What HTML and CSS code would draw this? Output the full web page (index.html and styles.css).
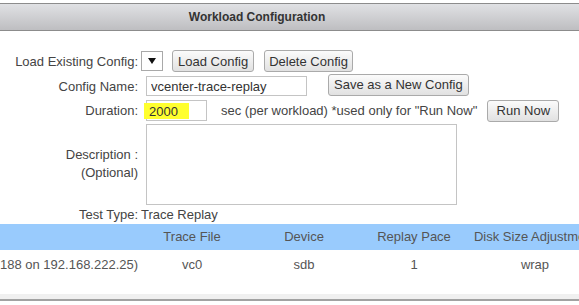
FILE: index.html
```html
<!DOCTYPE html>
<html lang="en">
<head>
    <meta charset="UTF-8">
    <meta name="viewport" content="width=device-width, initial-scale=1.0">
    <title>Workload Configuration</title>
    <link rel="stylesheet" href="styles.css">
</head>
<body>
    <div class="panel">
        <div class="panel_title">Workload Configuration</div>

        <div class="config_form">
            <label class="lbl">Load Existing Config:</label>
            <div class="field">
                <span class="select"><span class="arrow"></span></span>
                <button class="btn btn_load">Load Config</button>
                <button class="btn btn_delete">Delete Config</button>
            </div>

            <label class="lbl" for="config_name">Config Name:</label>
            <div class="field">
                <input type="text" id="config_name" class="txt txt_name" value="vcenter-trace-replay">
                <button class="btn btn_save">Save as a New Config</button>
            </div>

            <label class="lbl">Duration:</label>
            <div class="field">
                <span class="txt txt_duration"><span class="hl">2000</span></span>
                <span class="hint">sec (per workload) *used only for "Run Now"</span>
                <button class="btn btn_run">Run Now</button>
            </div>

            <label class="lbl lbl_desc">Description :<br>(Optional)</label>
            <div class="field">
                <textarea class="desc"></textarea>
            </div>

            <label class="lbl">Test Type:</label>
            <div class="field test_type">Trace Replay</div>
        </div>

        <div class="trace_table">
            <div class="row head">
                <div class="cell first"></div>
                <div class="cell">Trace File</div>
                <div class="cell">Device</div>
                <div class="cell">Replay Pace</div>
                <div class="cell">Disk Size Adjustment</div>
            </div>
            <div class="row">
                <div class="cell first">188 on 192.168.222.25)</div>
                <div class="cell">vc0</div>
                <div class="cell">sdb</div>
                <div class="cell">1</div>
                <div class="cell">wrap</div>
            </div>
        </div>
        <div class="panel_foot"></div>
    </div>
</body>
</html>
```

FILE: styles.css
```css
body { margin: 3px 0 0 0; background: #fff; font-family: "Liberation Sans", Arial, sans-serif; font-size: 13px; color: #3a3a3a; overflow: hidden; }

.panel_title { height: 26px; line-height: 26px; border-top: 1px solid #8c8c8c; border-bottom: 1px solid #8c8c8c; background: linear-gradient(#e0e1e4, #bebec1); text-align: center; padding-right: 65px; font-weight: bold; font-size: 12px; color: #333; }

.config_form { display: grid; grid-template-columns: 138px 1fr; grid-template-rows: 24px 26px 23px 84px 16px; column-gap: 3px; padding-top: 18px; }
.lbl { text-align: right; align-self: center; color: #444; }
.lbl_desc { line-height: 18px; }
.field { display: flex; align-items: center; }
.test_type { color: #444; }

.select { width: 22px; height: 20px; box-sizing: border-box; border: 1px solid #a9a9a9; background: #fff; display: flex; align-items: center; justify-content: center; }
.select .arrow { width: 0; height: 0; border-left: 4px solid transparent; border-right: 4px solid transparent; border-top: 6px solid #111; }

.btn { height: 22px; box-sizing: border-box; padding: 0 5px; border: 1px solid #aaa; border-radius: 3px; background: linear-gradient(#fbfbfb, #e1e1e1); font-family: "Liberation Sans", Arial, sans-serif; font-size: 13px; color: #333; }
.btn_load { margin-left: 9px; }
.btn_delete { margin-left: 10px; padding: 0 4px; }
.btn_save { margin-left: 21px; margin-top: -3px; }
.btn_run { margin-left: 10px; width: 72px; }

.txt { height: 20px; box-sizing: border-box; border: 1px solid #c4c4c4; background: #fff; font-family: "Liberation Sans", Arial, sans-serif; font-size: 13px; color: #333; padding: 0 4px; margin-left: 5px; }
.txt_name { width: 161px; }
.txt_duration { width: 61px; height: 21px; display: flex; align-items: center; padding: 0; }
.hl { background: #ffff2e; margin-left: -3px; padding: 2px 11px 1px 5px; line-height: 13px; }
.hint { margin-left: 14px; color: #444; }

.desc { width: 311px; height: 81px; box-sizing: border-box; margin: 2px 0 0 5px; border: 1px solid #c4c4c4; resize: none; align-self: flex-start; }

.trace_table { margin-top: 2px; overflow: hidden; color: #555; }
.row { display: grid; grid-template-columns: 142px 100px 124px 96px 146px; white-space: nowrap; }
.row .cell { text-align: center; overflow: visible; }
.row .first { text-align: right; padding-right: 5px; overflow: hidden; }
.head { height: 26px; line-height: 26px; background: #99cbfd; }
.row:not(.head) { height: 30px; line-height: 30px; margin-bottom: 14px; }

.panel_foot { height: 5px; background: #f0f0f0; border-bottom: 2px solid #a2a2a2; }
```
